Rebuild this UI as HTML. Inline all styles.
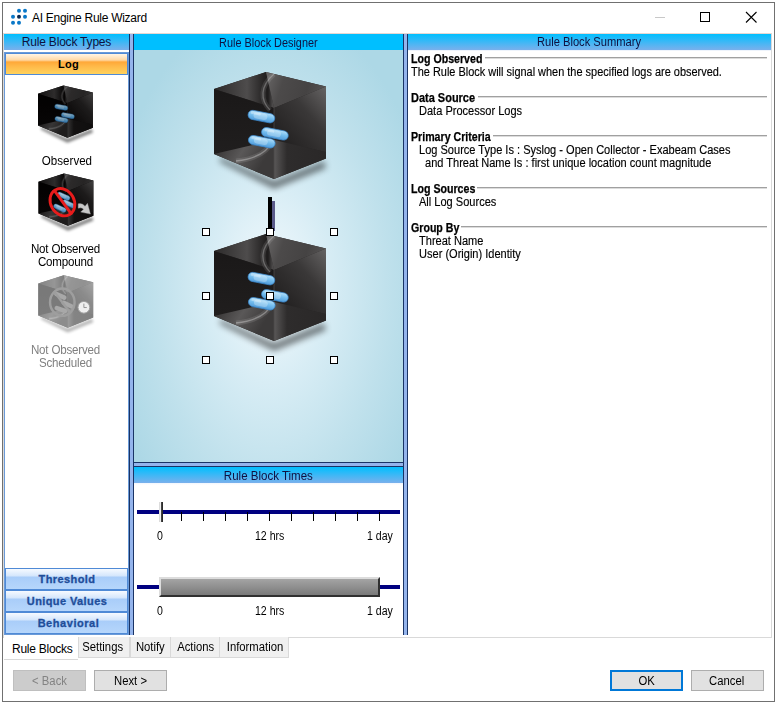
<!DOCTYPE html>
<html><head><meta charset="utf-8">
<style>
*{margin:0;padding:0;box-sizing:border-box}
html,body{width:776px;height:702px;overflow:hidden;background:#fff;font-family:"Liberation Sans",sans-serif;color:#000}
.a{position:absolute}
.hdr{position:absolute;height:16px;background:linear-gradient(#00bfff,#7ab0ec);color:#101040;font-size:12px;line-height:16px;text-align:center;white-space:nowrap}
.vs{position:absolute;width:5px;background:#94b4ec;border-left:1px solid #1a3466;border-right:1px solid #1a3466}
.hs{position:absolute;height:5px;background:#94b4ec;border-top:1px solid #1a3466;border-bottom:1px solid #1a3466}
.lbtn{position:absolute;left:5px;width:123px;height:22px;border:1px solid #4f8ad6;background:linear-gradient(#f6faff 0,#d4e6fc 7px,#a9cdf9 8px,#b6d6fb 100%);color:#1f4e9a;font-weight:bold;font-size:11px;line-height:20px;text-align:center;letter-spacing:0.4px;padding-left:1px;-webkit-text-stroke:0.3px #1f4e9a}
.lbl{position:absolute;left:5px;width:121px;text-align:center;font-size:12px;line-height:13px;transform:scaleX(0.965)}
.tab{position:absolute;top:637px;height:21px;background:#f0f0f0;border:1px solid #d9d9d9;border-top:none;font-size:12px;line-height:20px;text-align:center}
.btn{position:absolute;top:670px;width:73px;height:21px;background:#e1e1e1;border:1px solid #adadad;font-size:12px;line-height:21px;text-align:center}
.sum{position:absolute;left:411px;font-size:12px;line-height:13px;white-space:nowrap;transform-origin:0 0;transform:scaleX(0.92);-webkit-text-stroke:0.15px #000}
.sh{font-weight:bold;transform:scaleX(0.885);-webkit-text-stroke:0.25px #000}
.sl{position:absolute;height:2px;border-top:1px solid #a0a0a0;border-bottom:1px solid #dcdcdc}
.tick{position:absolute;width:1px;height:9px;background:#000}
.tl{position:absolute;font-size:12px;line-height:12px;white-space:nowrap;transform-origin:0 0;transform:scaleX(0.88);color:#000}
.sx{display:inline-block;transform:scaleX(0.94)}
.hd{position:absolute;width:8px;height:8px;background:#fff;border:1px solid #000}
</style></head><body>
<!-- window frame -->
<div class="a" style="left:2px;top:2px;width:773px;height:700px;border:1px solid #707070"></div>
<!-- title icon -->
<svg class="a" style="left:0;top:0" width="40" height="32">
<g fill="#0a78c8"><circle cx="19" cy="10.8" r="2"/><circle cx="25" cy="10.8" r="2"/><circle cx="13" cy="16.8" r="2"/><circle cx="25" cy="16.8" r="2"/><circle cx="13" cy="22.8" r="2"/><circle cx="19" cy="22.8" r="2"/></g>
<circle cx="19" cy="16.8" r="2" fill="#0b2a50"/>
</svg>
<div class="a" style="left:32px;top:10px;font-size:12px;line-height:16px;letter-spacing:-0.28px;white-space:nowrap">AI Engine Rule Wizard</div>
<!-- title controls -->
<div class="a" style="left:655px;top:17px;width:10px;height:1px;background:#c8c8c8"></div>
<div class="a" style="left:700px;top:12px;width:10px;height:10px;border:1px solid #000"></div>
<svg class="a" style="left:744px;top:10px" width="14" height="14"><path d="M2 2L12.5 12.5M12.5 2L2 12.5" stroke="#000" stroke-width="1.1"/></svg>

<!-- tab page border -->
<div class="a" style="left:3px;top:33px;width:769px;height:605px;border:1px solid #d9d9d9;border-top-color:#e4d8d4"></div>

<!-- LEFT PANEL -->
<div class="hdr" style="left:4px;top:34px;width:125px;letter-spacing:-0.2px">Rule Block Types</div>
<div class="a" style="left:4px;top:52px;width:125px;height:583px;border:1px solid #6a9ad8;background:#fff"></div>
<div class="a" style="left:5px;top:53px;width:123px;height:22px;border:1px solid #4f8ad6;background:linear-gradient(#fff5e6 0,#ffd9a6 6px,#ffa838 8px,#ffb848 12px,#ffd25c 100%);font-weight:bold;font-size:11px;line-height:20px;text-align:center;padding-left:4px;letter-spacing:0.2px">Log</div>

<div class="lbl" style="top:155px;padding-left:3px">Observed</div>
<div class="lbl" style="top:243px;letter-spacing:-0.2px">Not Observed<br>Compound</div>
<div class="lbl" style="top:344px;color:#808080;letter-spacing:-0.2px">Not Observed<br>Scheduled</div>

<div class="lbtn" style="top:568px">Threshold</div>
<div class="lbtn" style="top:590px">Unique Values</div>
<div class="lbtn" style="top:612px;letter-spacing:0.55px;padding-left:4px">Behavioral</div>

<!-- splitters -->
<div class="vs" style="left:129px;top:34px;height:601px"></div>
<div class="vs" style="left:403px;top:34px;height:601px"></div>

<!-- CENTER PANEL -->
<div class="hdr" style="left:134px;top:34px;width:269px;background:#00bfff;line-height:18px"><span style="display:inline-block;transform:scaleX(0.906)">Rule Block Designer</span></div>
<div class="a" style="left:134px;top:50px;width:269px;height:412px;background:radial-gradient(ellipse 165px 280px at 136px 235px,#f4fafd 0%,#d8edf5 35%,#c0e1ec 70%,#add8e6 100%)"></div>
<div class="hs" style="left:134px;top:462px;width:269px"></div>
<div class="hdr" style="left:134px;top:467px;width:269px;line-height:18px"><span style="display:inline-block;transform:scaleX(0.96)">Rule Block Times</span></div>
<div class="a" style="left:134px;top:483px;width:269px;height:152px;background:linear-gradient(#f0f6fe 0,#fff 2px)"></div>

<!-- RIGHT PANEL -->
<div class="hdr" style="left:408px;top:34px;width:363px"><span style="display:inline-block;transform:scaleX(0.93)">Rule Block Summary</span></div>
<div class="a" style="left:408px;top:50px;width:363px;height:1px;background:#eef4fc"></div>


<svg class="a" style="left:0;top:0;overflow:visible" width="0" height="0">
<defs>
<linearGradient id="gTL" gradientUnits="userSpaceOnUse" x1="0" y1="0" x2="60" y2="0">
<stop offset="0" stop-color="#2c2a2a"/><stop offset="0.55" stop-color="#4e4c4c"/><stop offset="0.8" stop-color="#2a2828"/><stop offset="0.9" stop-color="#1e1c1c"/><stop offset="1" stop-color="#5a5858"/>
</linearGradient>
<linearGradient id="gTR" gradientUnits="userSpaceOnUse" x1="52" y1="0" x2="112" y2="20">
<stop offset="0" stop-color="#6a6868"/><stop offset="0.3" stop-color="#4c4a4a"/><stop offset="0.7" stop-color="#454343"/><stop offset="1" stop-color="#575555"/>
</linearGradient>
<linearGradient id="gLW" x1="0" y1="0" x2="0" y2="1">
<stop offset="0" stop-color="#1a1818"/><stop offset="1" stop-color="#201e1e"/>
</linearGradient>
<linearGradient id="gFL" gradientUnits="userSpaceOnUse" x1="0" y1="80" x2="40" y2="105">
<stop offset="0" stop-color="#363434"/><stop offset="0.5" stop-color="#5a5858"/><stop offset="1" stop-color="#3c3a3a"/>
</linearGradient>
<linearGradient id="gRW" gradientUnits="userSpaceOnUse" x1="62" y1="60" x2="112" y2="16">
<stop offset="0" stop-color="#242222"/><stop offset="0.55" stop-color="#3a3838"/><stop offset="1" stop-color="#646262"/>
</linearGradient>
<linearGradient id="gFR" gradientUnits="userSpaceOnUse" x1="60" y1="0" x2="112" y2="0">
<stop offset="0" stop-color="#5a5858"/><stop offset="0.25" stop-color="#2e2c2c"/><stop offset="1" stop-color="#2a2828"/>
</linearGradient>
<linearGradient id="gPill" x1="0" y1="0" x2="0" y2="1">
<stop offset="0" stop-color="#b4e0fa"/><stop offset="0.5" stop-color="#74bdee"/><stop offset="1" stop-color="#529cda"/>
</linearGradient>
<filter id="fBlur" x="-20%" y="-80%" width="140%" height="260%"><feGaussianBlur stdDeviation="3"/></filter>
<g id="pill"><rect x="-13.5" y="-4.6" width="27" height="9.2" rx="4.6" fill="url(#gPill)" stroke="#3b88cc" stroke-width="0.7"/><rect x="-8" y="-3.4" width="14" height="6.2" rx="3.1" fill="#fff" opacity="0.28"/><rect x="-11" y="-3.2" width="10" height="2.4" rx="1.2" fill="#fff" opacity="0.3"/></g>
<g id="cubeBody">
<polygon points="6,85 60,109 110,89 112,96 60,117 6,90" fill="#000" opacity="0.5" filter="url(#fBlur)"/>
<polygon points="0,17 52,0 112,14.5 112,86.5 60,107 0,82" fill="#262424"/>
<polygon points="0,17 52,0 60,36" fill="url(#gTL)"/>
<polygon points="52,0 112,14.5 60,36" fill="url(#gTR)"/>
<polygon points="0,17 60,36 60,68 0,82" fill="url(#gLW)"/>
<polygon points="0,82 60,68 60,107" fill="url(#gFL)"/>
<polygon points="60,36 112,14.5 112,80 60,68" fill="url(#gRW)"/>
<polygon points="60,68 112,80 112,86.5 60,107" fill="url(#gFR)"/>
<path d="M60,2 C46,14 46,28 56,38" fill="none" stroke="#fff" stroke-opacity="0.10" stroke-width="5"/><path d="M60,2 C46,14 46,28 56,38" fill="none" stroke="#fff" stroke-opacity="0.25" stroke-width="1.3"/><path d="M59,68 C54,80 42,87 22,89" fill="none" stroke="#fff" stroke-opacity="0.10" stroke-width="5"/><path d="M59,68 C54,80 42,87 22,89" fill="none" stroke="#fff" stroke-opacity="0.3" stroke-width="1.4"/>
<path d="M60,36 L60,107" stroke="#4a4848" stroke-width="0.8"/>
</g>
<g id="pills"><use href="#pill" transform="translate(47.4,44.6) rotate(11)"/>
<use href="#pill" transform="translate(60.9,61.8) rotate(11)"/>
<use href="#pill" transform="translate(47.8,69.7) rotate(11)"/></g>
<g id="pillsG" fill="#6a6a6a"><rect x="-13.5" y="-4.6" width="27" height="9.2" rx="4.6" transform="translate(45,42) rotate(25)"/><rect x="-13.5" y="-4.6" width="27" height="9.2" rx="4.6" transform="translate(60,60) rotate(25)"/><rect x="-13.5" y="-4.6" width="27" height="9.2" rx="4.6" transform="translate(46,70) rotate(20)"/></g>
<g id="cube"><use href="#cubeBody"/><use href="#pills"/></g>
</defs>
</svg>

<svg class="a" style="left:0;top:0" width="130" height="400">
<use href="#cube" transform="translate(38,85.4) scale(0.49)" style="filter:brightness(0.72) contrast(1.15)"/>
<g transform="translate(38.5,173.4) scale(0.49)">
<use href="#cubeBody" style="filter:brightness(0.72) contrast(1.15)"/>
<g style="filter:brightness(0.85)"><use href="#pill" transform="translate(51.4,46.7) rotate(25)"/><use href="#pill" transform="translate(61.6,62.4) rotate(25)"/><use href="#pill" transform="translate(43.5,70.8) rotate(25)"/></g>
<ellipse cx="48.8" cy="58.8" rx="24" ry="29" transform="rotate(-30 48.8 58.8)" fill="none" stroke="#e81c1c" stroke-width="6"/>
<path d="M31,33 L68,84" stroke="#e81c1c" stroke-width="6"/>
<path d="M81,62 Q90,60 95,67 L100,61 L106,83 L86,79 L92,73 Q87,69 81,71 Z" fill="#c8c8c8" stroke="#9a9a9a" stroke-width="0.8"/>
</g>
<g transform="translate(38.3,275.2) scale(0.49)" style="filter:grayscale(1)" opacity="0.58">
<use href="#cubeBody"/>
<use href="#pillsG"/>
<ellipse cx="49" cy="55" rx="25" ry="28" fill="none" stroke="#5a5a5a" stroke-width="5"/>
<path d="M33,34 L66,78" stroke="#5a5a5a" stroke-width="5"/>
<circle cx="93" cy="65.5" r="12" fill="#e4e4e4" stroke="#5a5a5a" stroke-width="2"/>
<path d="M93,58 L93,66 L99,66" stroke="#222" stroke-width="1.6" fill="none"/>
</g>
</svg>
<svg class="a" style="left:134px;top:50px" width="269" height="412">
<use href="#cube" transform="translate(80,22)"/>
<use href="#cube" transform="translate(80,184)"/>
<rect x="134" y="147" width="4" height="34" fill="#000"/>
<rect x="138" y="151" width="3" height="30" fill="#5a5a8a"/>
</svg>
<div class="hd" style="left:202px;top:228px"></div><div class="hd" style="left:266px;top:228px"></div><div class="hd" style="left:330px;top:228px"></div><div class="hd" style="left:202px;top:292px"></div><div class="hd" style="left:266px;top:292px"></div><div class="hd" style="left:330px;top:292px"></div><div class="hd" style="left:202px;top:356px"></div><div class="hd" style="left:266px;top:356px"></div><div class="hd" style="left:330px;top:356px"></div>
<!-- summary -->
<div class="sum sh" style="top:53px">Log Observed</div>
<div class="sl" style="left:485px;top:57px;width:282px"></div>
<div class="sum" style="top:66px;transform:scaleX(0.912)">The Rule Block will signal when the specified logs are observed.</div>
<div class="sum sh" style="top:92px;transform:scaleX(0.915)">Data Source</div>
<div class="sl" style="left:478px;top:96px;width:289px"></div>
<div class="sum" style="top:105px;left:419px">Data Processor Logs</div>
<div class="sum sh" style="top:131px">Primary Criteria</div>
<div class="sl" style="left:493px;top:135px;width:274px"></div>
<div class="sum" style="top:144px;left:419px">Log Source Type Is : Syslog - Open Collector - Exabeam Cases</div>
<div class="sum" style="top:157px;left:425px">and Threat Name Is : first unique location count magnitude</div>
<div class="sum sh" style="top:183px">Log Sources</div>
<div class="sl" style="left:477px;top:187px;width:290px"></div>
<div class="sum" style="top:196px;left:419px">All Log Sources</div>
<div class="sum sh" style="top:222px">Group By</div>
<div class="sl" style="left:461px;top:226px;width:306px"></div>
<div class="sum" style="top:235px;left:419px">Threat Name</div>
<div class="sum" style="top:248px;left:419px">User (Origin) Identity</div>

<!-- tabs -->
<div class="a" style="left:4px;top:637px;width:74px;height:23px;background:#fff;border-bottom:1px solid #d9d9d9;font-size:12px;line-height:24px;padding-left:8px;letter-spacing:-0.25px">Rule Blocks</div>
<div class="tab" style="left:78px;width:52px;padding-right:2px"><span class="sx">Settings</span></div>
<div class="tab" style="left:130px;width:41px"><span class="sx">Notify</span></div>
<div class="tab" style="left:170px;width:50px;padding-left:2px"><span class="sx">Actions</span></div>
<div class="tab" style="left:219px;width:70px;padding-left:2px"><span class="sx">Information</span></div>

<!-- buttons -->
<div class="btn" style="left:13px;background:#ccc;border-color:#bfbfbf;color:#838383"><span class="sx">&lt; Back</span></div>
<div class="btn" style="left:94px"><span class="sx">Next &gt;</span></div>
<div class="btn" style="left:610px;border:2px solid #0078d7;line-height:19px"><span class="sx">OK</span></div>
<div class="btn" style="left:691px;padding-right:2px"><span class="sx">Cancel</span></div>

<!-- slider 1 -->
<div class="a" style="left:137px;top:510px;width:263px;height:4px;background:#000080"></div>
<div class="a" style="left:159px;top:502px;width:4px;height:20px;background:linear-gradient(90deg,#c8c8c8 0,#f0f0f0 1px,#f0f0f0 2px,#505050 2px,#202020 4px)"></div>
<div class="tl" style="left:157px;top:530px">0</div>
<div class="tl" style="left:255px;top:530px">12 hrs</div>
<div class="tl" style="left:367px;top:530px">1 day</div>
<!-- slider 2 -->
<div class="a" style="left:137px;top:585px;width:263px;height:4px;background:#000080"></div>
<div class="a" style="left:159px;top:577px;width:221px;height:20px;border-top:2px solid #dcdcdc;border-left:2px solid #dcdcdc;border-bottom:2px solid #303030;border-right:2px solid #303030;background:linear-gradient(#a4a4a4,#7a7a7a)"></div>
<div class="tl" style="left:157px;top:605px">0</div>
<div class="tl" style="left:255px;top:605px">12 hrs</div>
<div class="tl" style="left:367px;top:605px">1 day</div>

<div class="tick" style="left:181px;top:512px"></div><div class="tick" style="left:203px;top:512px"></div><div class="tick" style="left:225px;top:512px"></div><div class="tick" style="left:247px;top:512px"></div><div class="tick" style="left:269px;top:512px"></div><div class="tick" style="left:291px;top:512px"></div><div class="tick" style="left:313px;top:512px"></div><div class="tick" style="left:335px;top:512px"></div><div class="tick" style="left:357px;top:512px"></div><div class="tick" style="left:379px;top:512px"></div>
</body></html>
